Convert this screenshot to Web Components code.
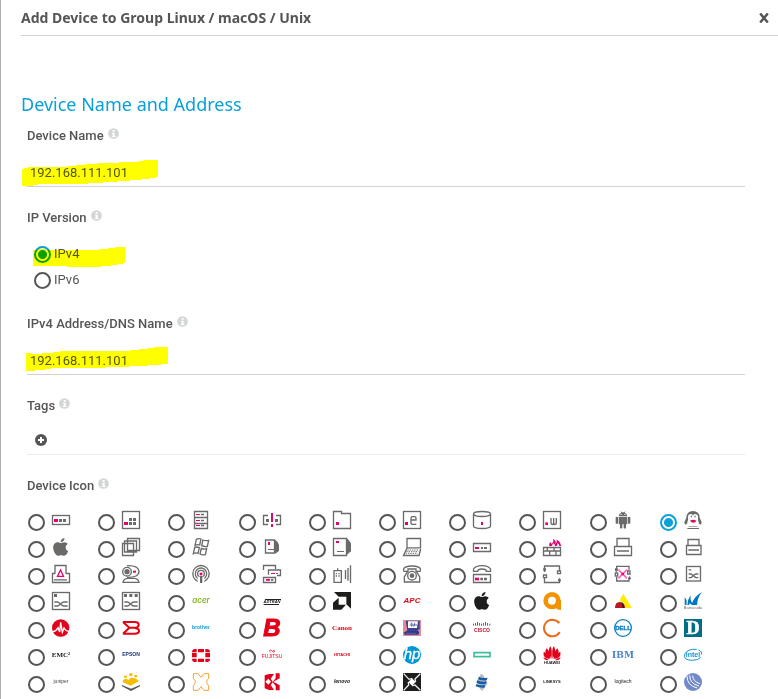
<!DOCTYPE html>
<html lang="en">
<head>
<meta charset="utf-8">
<title>Add Device</title>
<style>
  body { margin: 0; background: #fff; }
</style>
</head>
<body>
<add-device-dialog></add-device-dialog>

<template id="t-dialog">
  <style>
    :host { display: block; box-sizing: border-box; min-height: 100vh; border-left: 1px solid #adadad; padding-left: 20px; color: #555; font: 13px/20px Roboto, "Liberation Sans", sans-serif; }
    main { padding: 57px 33px 0 0; }
    form-field { margin: 0 0 21px 6px; }
    form-field:last-child { margin-bottom: 0; }
    h2 { margin: 0 0 11px; font: 400 18px/22px "Noto Sans", "Open Sans", sans-serif; color: #0aa0d9; }
  </style>
  <dialog-header>Add Device to Group Linux / macOS / Unix</dialog-header>
  <main>
    <h2>Device Name and Address</h2>
    <form-field label="Device Name"><text-entry label="Device Name" value="192.168.111.101"><marker-stroke class="name"></marker-stroke></text-entry></form-field>
    <form-field label="IP Version"><ip-version></ip-version></form-field>
    <form-field label="IPv4 Address/DNS Name"><text-entry label="IPv4 Address/DNS Name" value="192.168.111.101"><marker-stroke class="address"></marker-stroke></text-entry></form-field>
    <form-field label="Tags"><tag-editor></tag-editor></form-field>
    <form-field label="Device Icon"><icon-picker></icon-picker></form-field>
  </main>
</template>

<template id="t-header">
  <style>
    :host { display: flex; align-items: center; justify-content: space-between; height: 35px; border-bottom: 1px solid #d2d2d2; padding-right: 8px; }
    h1 { margin: 0; font: 700 14px/20px "Noto Sans", "Open Sans", sans-serif; color: #555; }
    button { border: 0; padding: 0; background: none; width: 12px; height: 12px; display: grid; place-items: center; cursor: pointer; }
  </style>
  <h1><slot></slot></h1>
  <button type="button" aria-label="Close"><svg width="10" height="10" viewBox="0 0 10 10"><path d="M1.200 .5L8.800 9.500M8.800 .5L1.200 9.500" stroke="#555" stroke-width="2.500" fill="none"/></svg></button>
</template>

<template id="t-field">
  <style>
    :host { display: block; }
    .caption { display: flex; gap: 4px; font-weight: 500; height: 20px; }
    svg { margin-top: 2px; }
  </style>
  <div class="caption"><span></span><svg width="11" height="11" viewBox="0 0 33 33" aria-hidden="true"><circle cx="16.500" cy="16.500" r="16" fill="#d3d6d7"/><path d="M14 6h6v5h-6zM12 14h8v10h3v3H11v-3h3v-7h-2z" fill="#fff"/></svg></div>
  <slot></slot>
</template>

<template id="t-entry">
  <style>
    :host { display: block; position: relative; }
    input { display: block; box-sizing: border-box; width: 100%; height: 41px; border: 0; border-bottom: 1px solid #d2d2d2; padding: 12px 3px 0; background: none; color: #555; font: inherit; outline: 0; }
  </style>
  <input type="text"><slot></slot>
</template>

<template id="t-marker">
  <style>
    :host { display: block; position: absolute; mix-blend-mode: multiply; pointer-events: none; }
    :host(.name) { left: -5px; top: 14px; }
    :host(.version) { left: 6px; top: 19px; }
    :host(.address) { left: -1px; top: 13px; }
    svg { display: block; fill: #ff0; }
  </style>
</template>

<template id="t-ip">
  <style>
    :host { display: flex; flex-direction: column; position: relative; padding: 14px 0 0 7px; }
    label { display: flex; align-items: flex-start; gap: 3px; height: 26px; width: max-content; }
    label:last-of-type { height: 25px; }
    input { appearance: none; box-sizing: border-box; width: 17px; height: 17px; margin: 4px 0 0; border: 2px solid #555; border-radius: 50%; background: #fff; }
    input:checked { border-color: #0aa0d9; background: radial-gradient(circle, #0aa0d9 4px, #fff 5px); }
    span { line-height: 24px; }
  </style>
  <label><input type="radio" name="ip" checked><span>IPv4</span></label>
  <label><input type="radio" name="ip"><span>IPv6</span></label>
  <marker-stroke class="version"></marker-stroke>
</template>

<template id="t-tags">
  <style>
    :host { display: block; padding: 18px 8px 8px; border-bottom: 1px solid #ebebeb; }
    button { display: block; width: 12px; height: 12px; border: 0; padding: 0; background: none; cursor: pointer; }
    svg { display: block; }
  </style>
  <button type="button" aria-label="Add tag"><svg width="12" height="12" viewBox="0 0 12 12"><circle cx="6" cy="6" r="6" fill="#555"/><path d="M6 3v6M3 6h6" stroke="#fff" stroke-width="2"/></svg></button>
</template>

<template id="t-picker">
  <style>
    :host { display: grid; grid-template-columns: repeat(10, 1fr); grid-auto-rows: 27px; padding: 15px 16px 0 0; }
    label { display: flex; gap: 7px; align-items: flex-start; }
    input { appearance: none; flex: none; box-sizing: border-box; width: 17px; height: 17px; margin: 3px 0 0 1px; border: 2px solid #555; border-radius: 50%; background: #fff; }
    input:checked { border-color: #0aa0d9; background: radial-gradient(circle, #0aa0d9 4px, #fff 5px); }
  </style>
</template>

<script>
const tpl = id => document.getElementById(id).content.cloneNode(true);
const define = (name, id, setup) => customElements.define(name, class extends HTMLElement {
  constructor() {
    super();
    this.attachShadow({ mode: 'open' }).append(tpl(id));
  }
  connectedCallback() {
    if (this.ready) return;
    this.ready = true;
    if (setup) setup(this, this.shadowRoot);
  }
});

const G = '#6a6a69', P = '#e5006d';
const box = `<rect x="1.500" y="1.500" width="51" height="51"/>`;
const line = inner => `<g fill="none" stroke="${G}" stroke-width="4">${inner}</g>`;
const fill = (c, d) => `<path fill="${c}" d="${d}"/>`;
const word = (s, c, size, y, extra = '') => `<text x="27" y="${y}" text-anchor="middle" fill="${c}" font-size="${size}" ${extra}>${s}</text>`;
const SANS = 'font-family="Liberation Sans, sans-serif"';
const BOLD = SANS + ' font-weight="700"';
const SERIF = 'font-family="Liberation Serif, serif" font-weight="700"';
const ROUND = 'font-family="Inter, sans-serif" font-weight="600"';
const apple = c => `<path fill="${c}" transform="translate(3 -4) scale(.12)" d="M318.7 268.7c-.2-36.7 16.4-64.4 50-84.8-18.8-26.9-47.2-41.700-84.700-44.600-35.500-2.800-74.300 20.700-88.500 20.700-15 0-49.400-19.700-76.400-19.700C63.300 141.200 4 184.800 4 273.500q0 39.300 14.400 81.200c12.800 36.700 59 126.700 107.200 125.200 25.200-.6 43-17.900 75.800-17.900 31.800 0 48.300 17.900 76.400 17.900 48.600-.7 90.400-82.500 102.600-119.300-65.200-30.700-61.700-90-61.700-91.900zm-56.600-164.200c27.300-32.400 24.800-61.900 24-72.500-24.100 1.400-52 16.400-67.900 34.900-17.500 19.800-27.800 44.300-25.600 71.900 26.100 2 49.900-11.400 69.500-34.300z"/>`;
const shuffle = `<path d="M7 30h9q4 0 7 4l5 4q4 4 9 4h10M7 42h9q4 0 7-4l6-5q4-3 8-3h10"/>`;

const GLYPHS = [
  ['Server', line(`<rect x="1.500" y="13.500" width="51" height="27"/>`) + fill(P, 'M6 24h12v9H6z') + fill(G, 'M21 24h9v9h-9zM33 24h9v9h-9z')],
  ['Device', line(box) + fill(P, 'M6 33h12v9H6z') + fill(G, 'M21 21h9v9h-9zM33 21h9v9h-9zM21 33h9v9h-9zM33 33h9v9h-9z')],
  ['Rack', line(`<path d="M7.500 1.500h39v51h-39zM7.500 19.500h39M7.500 37.500h39M27 10.500h9M27 28.500h9M27 43.500h9"/>`) + fill(P, 'M12 9h12v3H12zM12 27h12v3H12zM12 42h12v3H12z')],
  ['Alert device', line(`<path d="M15 13.500H1.500v27H15M39 13.500h13.500v27H39"/>`) + fill(G, 'M9 24h9v9H9zM36 24h9v9h-9z') + fill(P, 'M24 6h6v27h-6zM24 39h6v9h-6z')],
  ['Folder', line(`<path d="M1.500 1.500h24v6h27v45h-51z"/>`) + fill(P, 'M9 33h9v9H9z')],
  ['Mail server', line(box) + fill(P, 'M6 33h9v9H6z') + line(`<path d="M24 27h15v-6q0-4-4-4h-7q-4 0-4 4v15q0 4 4 4h12"/>`)],
  ['Database', line(`<ellipse cx="27" cy="9" rx="25.500" ry="7.500"/><path d="M1.500 9v36q0 7.500 25.500 7.500t25.500-7.500V9"/>`) + fill(P, 'M24 33h6v9h-6z')],
  ['Web server', line(box + `<path d="M24 21v15q0 4.500 4 4.500t4-4.500V21M32 36q0 4.500 4 4.500t4-4.500V21"/>`) + fill(P, 'M7 34h8v8H7z')],
  ['Android', fill(G, 'M14 16q1-9 8-11l-3-5 5 4h6l5-4-3 5q7 2 8 11zM14 18h26v22H14zM5 19q3-3 7 0v18q-4 3-7 0zM42 19q3-3 7 0v18q-4 3-7 0zM18 40h7v11q-4 3-7 0zM29 40h7v11q-4 3-7 0z') + fill('#fff', 'M20 9h3v3h-3zM31 9h3v3h-3z')],
  ['Linux', fill(G, 'M7 20Q8 0 27 0t20 20l6 14-2 7-6-3-6 9H15l-6-9-6 3-2-7z') + fill('#fff', 'M12 17q1-8 9-8 5 0 6 5 1-5 6-5 8 0 9 8v9l3 12q-1 8-10 8H19q-9 0-10-8l3-12z') + fill(G, 'M20 14h4v5h-4zM31 14h4v5h-4zM10 51h35v3H10z') + fill(P, 'M18 29q9-5 19 0-3 6-9 6t-10-6z')],

  ['macOS', apple(G)],
  ['Virtual machine', line(`<path d="M16.500 1.500h36v36h-36zM7.500 9h36v33h-36zM1.500 16.500h33v36h-33z"/>`)],
  ['Windows', line(`<path d="M11 4q6-4 14-1l-4 18q-7-3-14 1zM31 6q8 3 17 1l-4 18q-8 2-17-2zM6 29q7-4 14 0l-4 17q-7-3-14 1zM26 31q8 4 16 1l-4 18q-8 2-16-2z" transform="translate(2 0)"/>`)],
  ['Small computer', line(`<path d="M7.500 6h27v39h-27z"/>`) + fill(G, 'M36 5l8 7 4 9v17l-4 4-8 5z') + fill(P, 'M15 12h6v9h-6z') + fill(G, 'M15 33h18v3H15z')],
  ['Computer', line(`<path d="M1.500 1.500h39v51h-39z"/>`) + fill(G, 'M40 0l7 6 7 10v24l-14 12z') + fill(P, 'M9 9h9v6H9z') + fill(G, 'M12 39h21v3H12z')],
  ['Laptop', line(`<path d="M12 1.500h40.500v28H12zM12 30L1.500 52.500H48L53 33"/>`) + `<path d="M13 36h34M10 41h36M8 46h36" stroke="${G}" stroke-width="3" stroke-dasharray="4 3"/>`],
  ['Switch', line(`<path d="M1.500 16.500h51v24h-51z"/>`) + fill(P, 'M6 27h12v6H6z') + fill(G, 'M24 27h6v6h-6zM33 27h9v6h-9z')],
  ['Firewall', line(`<path d="M1.500 28.500h51v24h-51zM1.500 39h51M13 28v11M33 28v11M20 40v12M39 40v12"/>`) + fill(P, 'M19 24q-3-7 4-12l2 6Q34 11 30 2q10 6 8 16 5-4 3-13 12 5 13 19h-5q-1-8-5-8l-3 8h-5q-1-8-5-8l-5 8h-4z')],
  ['Printer', line(`<path d="M9 25.500v-24h36v24M1.500 25.500h51v27h-51zM9 39h36"/>`)],
  ['Small printer', line(`<path d="M12 22.500v-18h33v18M7.500 22.500h43.500v27H7.500zM13 36h32"/>`)],

  ['Print alert', line(`<path d="M9 26V1.500h33V26M9 25.500H1.500v27h51v-27H42M6 44.500h39"/>`) + `<path d="M25.500 15l9 19h-18z" fill="none" stroke="${P}" stroke-width="4"/>`],
  ['Webcam', line(`<path d="M15 2Q49 1 51 19 51 38 15 37"/><circle cx="15" cy="20" r="13"/><path d="M3 52q2-11 14-12h20q12 1 14 12z"/>`) + `<circle cx="15" cy="20" r="8" fill="${G}"/>` + fill(P, 'M33 17h9v6h-9z')],
  ['Antenna', line(`<circle cx="27" cy="26" r="24.500"/><circle cx="27" cy="26" r="17"/><circle cx="27" cy="26" r="10"/>`) + fill('#fff', 'M17 35h20v19H17z') + fill(G, 'M24 33h7v21h-7z') + fill(P, 'M23 23h8v8h-8z')],
  ['Network', line(`<path d="M1.500 15V1.500H37.500V12M16.500 29V15H52.500V31.500H42M1.500 37.500h36v15h-36z"/>`) + fill(P, 'M24 24h12v3H24zM9 42h12v5H9z') + fill(G, 'M39 24h6v3h-6zM24 42h7v5h-7z')],
  ['Wireless device', line(`<path d="M3 17h22v35H3zM14 17V10M37.500 15v27M45 9v38M52.500 1v53"/>`) + fill(G, 'M8 24h4v4H8zM16 24h4v4h-4zM8 31h4v4H8zM16 31h4v4h-4z')],
  ['Phone', line(`<path d="M3 19L1.500 13Q5 3 27 3t25.500 10L51 19H39v-7H15v7zM14 19L4 36v15h46V36L40 19"/><circle cx="27" cy="32" r="13"/>`) + `<circle cx="27" cy="32" r="7" fill="${G}"/>`],
  ['VoIP', line(`<path d="M1.500 19V12Q8 2 27 2t25.500 10v7H40q0-7-13-7T14 19zM1.500 28.500h51v24h-51z"/>`) + fill(P, 'M6 38h12v8H6z') + fill(G, 'M22 38h8v8h-8zM33 38h9v8h-9z')],
  ['Loop', line(`<path d="M4.500 20V3H49.500V16M4.500 39V52.500H49.500V44M1.500 30h9v8h-9zM43.500 18h9v8h-9z"/>`) + fill(G, 'M0 10h9v6l-4 6-4-6zM45 45l4-7 5 7v4h-9z')],
  ['Broken loop', line(`<path d="M8 18V4H45V14M8 36V48H45V39M4 24h7v9H4zM41 18h7v9h-7z"/>`) + fill(G, 'M3 10h8v7l-4 4-4-4zM42 40l5-7 4 7v3h-9z') + `<path d="M13 14L39 40M39 14L13 40" stroke="#f29" stroke-width="5" opacity=".7"/><circle cx="26" cy="27" r="4" fill="${P}"/>`],
  ['Small router', line(`<rect x="7.500" y="4.500" width="42" height="43.500"/><path d="M14 14.500h8M14 27h6q3 0 5 3l5 4q4 4 7 4h6M14 38h6q3 0 5-4l5-4q4-3 7-3h6"/>`)],

  ['Router', line(box + shuffle) + fill(G, 'M6 6h9v9H6z')],
  ['Core router', line(box + shuffle) + fill(G, 'M6 6h9v9H6zM22 6h9v9h-9zM38 6h9v9h-9z')],
  ['Acer', word('acer', '#80b81b', 24, 32, 'font-family="Inter, sans-serif" font-weight="600" font-style="italic"')],
  ['Adtran', word('ADTRAN', '#111', 12, 34, BOLD + ' font-style="italic"') + fill('#222', 'M7 21h47v3H5zM2 36h46v3H2z')],
  ['AMD', fill('#1d1d1b', 'M3 0h51v50L40 37V14H17zM17 17v21h22L25 53H0V32z')],
  ['APC', word('APC', '#e30613', 24, 34, BOLD + ' font-style="italic"')],
  ['Apple', apple('#1d1d1b')],
  ['Avast', `<circle cx="27" cy="26" r="19" fill="none" stroke="#f29400" stroke-width="14"/>` + fill('#f29400', 'M39 24h15v30q-13 0-17-9z')],
  ['Allied Telesis', fill('#ffec00', 'M28 5l26 43H31q4-18-15-22z') + fill('#be1622', 'M3 48q0-18 14-18 16 1 16 18z') + fill('#222', 'M22 31q8 2 9 17h-5q0-9-4-17z')],
  ['Barracuda', fill('#0078bf', 'M2 16q7 6 6 17l-1 6H2zM10 39Q11 22 20 10q-2 18 5 22Q31 13 54 0 40 17 39 39H27q-8 0-9-6l-3 6z') + word('Barracuda', '#666', 12, 51, SANS)],

  ['Pulse', `<circle cx="26" cy="27" r="26" fill="#e2001a"/><path d="M1 37q8 1 12-4l5-7 5 13 3-29 5 30 5-13q5 10 17 10" fill="none" stroke="#fff" stroke-width="4"/>`],
  ['Brocade', `<path d="M3 9h36q11 0 11 8t-11 10q14 2 12 11-2 6-12 6H3M3 9l19 17L3 44M22 26h18" fill="none" stroke="#e60012" stroke-width="6"/>`],
  ['Brother', word('brother', '#0a9bd8', 15, 30, ROUND)],
  ['B', word('B', '#e2001a', 72, 52, BOLD + ' font-style="italic" stroke="#e2001a" stroke-width="3"')],
  ['Canon', word('Canon', '#e2001a', 21, 32, SERIF)],
  ['Computer shop', fill('#e8899a', 'M0 3h54v48H0z') + fill('#3b428e', 'M8 5h42v26l-9 4H13z') + fill('#fff', 'M15 7h30l-3 20H15z') + fill('#303b8c', 'M2 41l12-7h31l4 7-3 6H5z') + `<path d="M24 14q4-8 2 9m7-12q5 0-1 12m-12-5h22M9 43h29" stroke="#59619d" stroke-width="3" fill="none"/>`],
  ['Cisco', `<path d="M1.500 14v6M7.500 12v8M13.500 9v11M19.500 12v8M25.500 14v6M31.500 12v8M37.500 9v11M43.500 12v8M50.500 14v6" stroke="#4a7184" stroke-width="3"/>` + word('CISCO', '#c8102e', 15, 39, BOLD)],
  ['C', `<path d="M49 12Q40 2 27 2a25 25 0 1 0 23 37" fill="none" stroke="#ee6b18" stroke-width="6"/>`],
  ['Dell', `<circle cx="27" cy="27" r="25" fill="#fff" stroke="#087fc3" stroke-width="4"/>` + word('DELL', '#087fc3', 18, 33, BOLD + ' stroke="#087fc3"')],
  ['D-Link', fill('#006d87', 'M0 0h54v54H0z') + word('D', '#fff', 54, 45, SERIF + ' stroke="#fff" stroke-width="2"')],

  ['EMC', word('EMC²', '#222', 21, 32, SERIF)],
  ['Epson', word('EPSON', '#1b3475', 15, 31, BOLD)],
  ['Fortinet', fill('#e2001a', 'M18 9h18v10H18zM0 21h14v13H0zM40 21h14v13H40zM18 38h18v10H18zM0 19q0-10 10-10h4v10zM40 9h4q10 0 10 10H40zM0 38h14v10h-4Q0 48 0 38zM40 38h14q0 10-10 10h-4z')],
  ['Fujitsu', word('FUJITSU', '#e2001a', 15, 35, SANS) + `<path d="M22 19q-5-8 2-7 4 2 5 5 2-7 6-3 1 4-5 5" fill="none" stroke="#e2001a" stroke-width="2"/>`],
  ['Hitachi', word('HITACHI', '#e2001a', 12, 31, BOLD)],
  ['HP', `<circle cx="27" cy="27" r="27" fill="#0096d6"/>` + word('hp', '#fff', 45, 39, SANS + ' font-style="italic" stroke="#fff"')],
  ['HPE', `<path d="M3 20h48v12H3z" fill="none" stroke="#3dbd9b" stroke-width="5"/>`],
  ['Huawei', fill('#e2001a', 'M25 39Q11 12 22 1q7 9 3 38zM29 39Q43 12 32 1q-7 9-3 38zM22 39Q0 21 11 7q9 6 11 32zM32 39Q54 21 43 7q-9 6-11 32zM20 39Q-2 36 2 17q11 5 18 22zM34 39q22-3 18-22-11 5-18 22zM18 42Q5 45 1 34q7 2 17 8zM36 42q13 3 17-8-7 2-17 8z') + word('HUAWEI', '#222', 12, 53, BOLD)],
  ['IBM', word('IBM', '#3a78be', 27, 36, 'font-family="DejaVu Serif, serif" font-weight="700"') + `<path d="M0 19h54M0 24h54M0 29h54M0 34h54" stroke="#fff" opacity=".5"/>`],
  ['Intel', `<path d="M38 10Q12 8 3 23q-8 20 22 20 18 0 25-9M44 12q11 4 8 14" fill="none" stroke="#1292d1" stroke-width="3"/>` + word('intel', '#1292d1', 21, 33, BOLD)],

  ['Juniper', word('juniper', '#444', 15, 30, SANS)],
  ['Layers', fill('#f5bd00', 'M3 22l7-5 10 3 7-6 13 2 11 8-25 14L2 27zM6 8h9v6H6zM22 1h9v8h-9zM37 6h8v7h-8z') + fill('#555', 'M0 36l27 11 27-11v4L27 54 0 40z')],
  ['Extreme', `<path d="M4 2h14l9 11 9-11h14v14q-12 11 0 22v14H36l-9-11-9 11H4V38q12-11 0-22z" fill="none" stroke="#f3a536" stroke-width="3"/>`],
  ['K', fill('#e2001a', 'M5 7L18 3h15L23 17l6 9 9-10V1h12v15L31 26l19 11v15H38V39l-9-11-6 8 10 15H18L5 46z') + fill('#fff', 'M7 26l9-9 8 9-8 9z')],
  ['Lenovo', word('lenovo', '#222', 15, 31, BOLD + ' font-style="italic"')],
  ['Crossroads', fill('#1d1d1b', 'M0 0h54v54H0z') + fill('#fff', 'M27 16l11 11-11 11-11-11z') + `<path d="M2 2l16 17 9-3M52 2L36 18l2 9M52 52L36 36l-9 2M2 52l15-16-1-9" fill="none" stroke="#eee" stroke-width="4"/>`],
  ['Stripes', fill('#b8bec3', 'M24 2l7 5 13 24-16 23-7-6-11-21z') + fill('#155da8', 'M18 11q9 6 26 3l-3 8q-14 2-26-3zM13 22q12 6 28 3l-3 8q-15 2-27-3zM10 33q10 6 27 3l-3 8q-15 1-26-4z')],
  ['Linksys', word('LINKSYS', '#222', 12, 31, BOLD)],
  ['Logitech', word('logitech', '#222', 15, 31, SANS)],
  ['Swoosh', `<circle cx="27" cy="27" r="27" fill="#7189c8"/><path d="M9 9q0 29 31 36M17 7q0 25 28 32M26 8q1 18 22 24" fill="none" stroke="#fff" stroke-width="3"/>`]
];

customElements.define('device-glyph', class extends HTMLElement {
  connectedCallback() {
    if (this.shadowRoot) return;
    this.attachShadow({ mode: 'open' }).innerHTML =
      `<style>:host{display:block;flex:none;width:18px;height:18px}svg{display:block;overflow:visible}</style>
       <svg width="18" height="18" viewBox="0 0 54 54">${GLYPHS[+this.getAttribute('index')][1]}</svg>`;
  }
});

const STROKES = {
  name: [136, 26, 'M0 9L8 7H41L58 5 81 3 113 2 125 0H136V17L124 19 103 21 58 24H18L8 26H0z'],
  version: [92, 20, 'M0 3L9 2 17 3H64L67 2 82 1V0H92V16L82 18 65 20H37L30 19H0z'],
  address: [142, 24, 'M0 6L10 7 32 5 36 4H99L117 2 131 0H142V17L115 19 67 21H27L17 23 0 24z']
};

define('marker-stroke', 't-marker', (el, root) => {
  const [w, h, d] = STROKES[el.className];
  root.innerHTML += `<svg width="${w}" height="${h}" viewBox="0 0 ${w} ${h}" shape-rendering="crispEdges"><path d="${d}"/></svg>`;
});
define('dialog-header', 't-header');
define('form-field', 't-field', (el, root) => { root.querySelector('span').textContent = el.getAttribute('label'); });
define('text-entry', 't-entry', (el, root) => {
  const input = root.querySelector('input');
  input.value = el.getAttribute('value');
  input.setAttribute('aria-label', el.getAttribute('label'));
});
define('ip-version', 't-ip');
define('tag-editor', 't-tags');
define('icon-picker', 't-picker', (el, root) => {
  root.innerHTML += GLYPHS.map(([name], i) =>
    `<label><input type="radio" name="icon" aria-label="${name}"${i === 9 ? ' checked' : ''}><device-glyph index="${i}"></device-glyph></label>`).join('');
});
define('add-device-dialog', 't-dialog');
</script>
</body>
</html>
